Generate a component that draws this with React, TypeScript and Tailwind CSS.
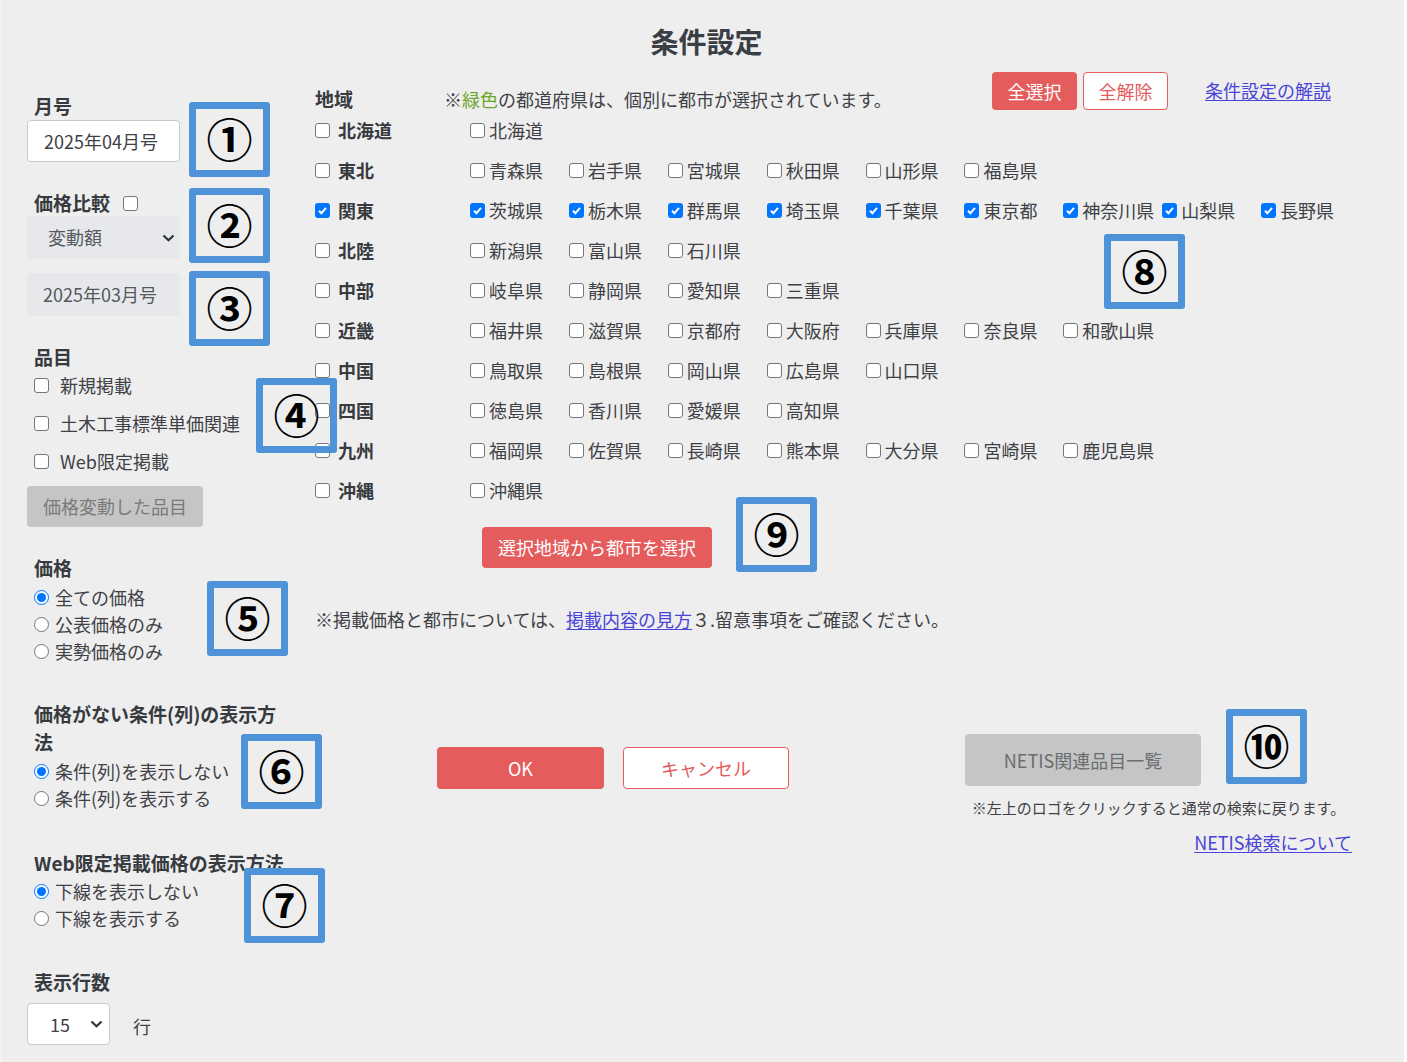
import React from "react";

const regions = [
  { name: "北海道", checked: false, prefs: ["北海道"] },
  { name: "東北", checked: false, prefs: ["青森県", "岩手県", "宮城県", "秋田県", "山形県", "福島県"] },
  {
    name: "関東",
    checked: true,
    prefs: ["茨城県", "栃木県", "群馬県", "埼玉県", "千葉県", "東京都", "神奈川県", "山梨県", "長野県"],
  },
  { name: "北陸", checked: false, prefs: ["新潟県", "富山県", "石川県"] },
  { name: "中部", checked: false, prefs: ["岐阜県", "静岡県", "愛知県", "三重県"] },
  { name: "近畿", checked: false, prefs: ["福井県", "滋賀県", "京都府", "大阪府", "兵庫県", "奈良県", "和歌山県"] },
  { name: "中国", checked: false, prefs: ["鳥取県", "島根県", "岡山県", "広島県", "山口県"] },
  { name: "四国", checked: false, prefs: ["徳島県", "香川県", "愛媛県", "高知県"] },
  { name: "九州", checked: false, prefs: ["福岡県", "佐賀県", "長崎県", "熊本県", "大分県", "宮崎県", "鹿児島県"] },
  { name: "沖縄", checked: false, prefs: ["沖縄県"] },
];

// annotation boxes drawn over the screenshot
const marks = [
  { n: "①", cls: "left-[188px] top-[102px]" },
  { n: "②", cls: "left-[188px] top-[188px]" },
  { n: "③", cls: "left-[188px] top-[271px]" },
  { n: "④", cls: "left-[255px] top-[378px]" },
  { n: "⑤", cls: "left-[206px] top-[581px]" },
  { n: "⑥", cls: "left-[240px] top-[734px]" },
  { n: "⑦", cls: "left-[243px] top-[868px]" },
  { n: "⑧", cls: "left-[1103px] top-[234px]" },
  { n: "⑨", cls: "left-[735px] top-[497px]" },
  { n: "⑩", cls: "left-[1225px] top-[709px]" },
];

const Chevron = () => (
  <svg width="13" height="8" viewBox="0 0 13 8">
    <path d="M1.5 1.5 6.5 6.2l5-4.7" stroke="#2f3338" strokeWidth="2.2" fill="none" />
  </svg>
);

const Label: React.FC<{ children: React.ReactNode; className?: string }> = ({ children, className = "" }) => (
  <div className={"pl-[7px] text-[19px] font-bold leading-[24px] text-[#373a3f] " + className}>{children}</div>
);

const Box = ({ checked = false }: { checked?: boolean }) =>
  checked ? (
    <span className="flex h-[15px] w-[15px] shrink-0 items-center justify-center rounded-[3px] bg-[#0075ff]">
      <svg width="11" height="11" viewBox="0 0 11 11">
        <path d="M2 5.8 4.4 8.2 9 2.8" stroke="white" strokeWidth="2" fill="none" />
      </svg>
    </span>
  ) : (
    <span className="h-[15px] w-[15px] shrink-0 rounded-[3px] border-[1.5px] border-[#767676] bg-white" />
  );

const Radio = ({ checked = false }: { checked?: boolean }) =>
  checked ? (
    <span className="flex h-[15px] w-[15px] shrink-0 items-center justify-center rounded-full border-[1.5px] border-[#0075ff] bg-white">
      <span className="h-[9px] w-[9px] rounded-full bg-[#0075ff]" />
    </span>
  ) : (
    <span className="h-[15px] w-[15px] shrink-0 rounded-full border-[1.5px] border-[#767676] bg-white" />
  );

const RadioRow = ({ label, checked = false }: { label: string; checked?: boolean }) => (
  <label className="flex h-[27px] items-center pl-[7px]">
    <Radio checked={checked} />
    <span className="ml-[6px]">{label}</span>
  </label>
);

export default function App() {
  return (
    <div className="min-h-screen bg-white font-['Noto_Sans_CJK_JP','Noto_Sans',sans-serif] text-[18px] text-[#3e4146]">
      <div className="relative h-[1062px] w-[1404px] border-l border-l-[#f4f4f4] bg-[#eeeeee]">
        <h1 className="pl-[8px] pt-[21px] text-center text-[28px] font-bold leading-[40px] text-[#3a3e45]">
          条件設定
        </h1>

        <div className="mt-[11px] flex pl-[26px]">
          {/* left column */}
          <div className="w-[263px] shrink-0 pt-[22px]">
            <Label>月号</Label>
            <div className="mt-[2px] flex h-[42px] w-[153px] items-center rounded-[4px] border border-[#c9c9c9] bg-white pl-[16px] leading-none">
              2025年04月号
            </div>

            <div className="mt-[29px] flex h-[24px] items-center">
              <Label>価格比較</Label>
              <span className="ml-[13px] flex">
                <Box />
              </span>
            </div>
            <div className="mt-[1px] flex h-[43px] w-[153px] items-center justify-between rounded-[4px] bg-[#e6e8eb] pl-[21px] pr-[5px] text-[#55585d]">
              <span>変動額</span>
              <Chevron />
            </div>
            <div className="mt-[14px] flex h-[43px] w-[153px] items-center rounded-[4px] bg-[#e6e8eb] pl-[16px] text-[#55585d]">
              2025年03月号
            </div>

            <Label className="mt-[29px]">品目</Label>
            <div className="mt-[4px] flex flex-col gap-[14px] pl-[7px]">
              {["新規掲載", "土木工事標準単価関連", "Web限定掲載"].map((t) => (
                <label key={t} className="flex h-[24px] items-center">
                  <Box />
                  <span className="ml-[11px]">{t}</span>
                </label>
              ))}
            </div>
            <button className="mt-[13px] flex h-[41px] w-[176px] items-center justify-center rounded-[4px] bg-[#c5c5c5] text-[#7a7a7a]">
              価格変動した品目
            </button>

            <Label className="mt-[29px]">価格</Label>
            <div className="mt-[4px]">
              <RadioRow label="全ての価格" checked />
              <RadioRow label="公表価格のみ" />
              <RadioRow label="実勢価格のみ" />
            </div>

            <Label className="mt-[35px] w-[262px] leading-[28px]">価格がない条件(列)の表示方法</Label>
            <div className="mt-[2px]">
              <RadioRow label="条件(列)を表示しない" checked />
              <RadioRow label="条件(列)を表示する" />
            </div>

            <Label className="mt-[37px] leading-[28px]">Web限定掲載価格の表示方法</Label>
            <div className="mt-[1px]">
              <RadioRow label="下線を表示しない" checked />
              <RadioRow label="下線を表示する" />
            </div>

            <Label className="mt-[38px]">表示行数</Label>
            <div className="mt-[9px] flex items-center">
              <div className="flex h-[42px] w-[83px] items-center justify-between rounded-[4px] border border-[#c9c9c9] bg-white pl-[22px] pr-[6px]">
                <span>15</span>
                <Chevron />
              </div>
              <span className="ml-[23px] mt-[4px]">行</span>
            </div>
          </div>

          {/* right area */}
          <div className="ml-[25px] flex-1">
            <div className="flex h-[38px] items-start">
              <div className="mt-[15px] w-[129px] text-[19px] font-bold leading-[24px] text-[#373a3f]">地域</div>
              <div className="mt-[15px] w-[548px] leading-[24px]">
                ※<span className="text-[#6ea82a]">緑色</span>の都道府県は、個別に都市が選択されています。
              </div>
              <button className="flex h-[38px] w-[85px] items-center justify-center rounded-[4px] bg-[#e45c5c] text-white">
                全選択
              </button>
              <button className="ml-[6px] flex h-[38px] w-[85px] items-center justify-center rounded-[4px] border border-[#e45c5c] bg-white text-[#e45c5c]">
                全解除
              </button>
              <a className="ml-[37px] mt-[6px] leading-[24px] text-[#4a45d6] underline underline-offset-2">
                条件設定の解説
              </a>
            </div>

            <div>
              {regions.map((r) => (
                <div key={r.name} className="flex h-[40px] items-center">
                  <label className="flex w-[155px] shrink-0 items-center">
                    <Box checked={r.checked} />
                    <span className="ml-[8px] font-bold text-[#373a3f]">{r.name}</span>
                  </label>
                  <div className="grid grid-cols-[repeat(9,98.9px)]">
                    {r.prefs.map((p) => (
                      <label key={p} className="flex items-center whitespace-nowrap">
                        <Box checked={r.checked} />
                        <span className="ml-[4px]">{p}</span>
                      </label>
                    ))}
                  </div>
                </div>
              ))}
            </div>

            <button className="ml-[167px] mt-[17px] flex h-[41px] w-[230px] items-center justify-center rounded-[4px] bg-[#e45c5c] text-white">
              選択地域から都市を選択
            </button>

            <p className="mt-[39px] leading-[24px]">
              ※掲載価格と都市については、
              <a className="text-[#4a45d6] underline underline-offset-2">掲載内容の見方</a>
              ３.留意事項をご確認ください。
            </p>

            <div className="mt-[103px] flex items-start">
              <button className="ml-[122px] mt-[13px] flex h-[42px] w-[167px] items-center justify-center rounded-[4px] bg-[#e45c5c] text-white">
                OK
              </button>
              <button className="ml-[19px] mt-[13px] flex h-[42px] w-[166px] items-center justify-center rounded-[4px] border border-[#e45c5c] bg-white text-[#e45c5c]">
                キャンセル
              </button>
              <div className="ml-[176px] flex w-[387px] flex-col">
                <button className="flex h-[52px] w-[236px] items-center justify-center rounded-[4px] bg-[#c5c5c5] text-[#6a6d72]">
                  NETIS関連品目一覧
                </button>
                <p className="mt-[12px] text-center text-[15px] leading-[20px]">
                  ※左上のロゴをクリックすると通常の検索に戻ります。
                </p>
                <a className="mt-[12px] self-end leading-[24px] text-[#4a45d6] underline underline-offset-2">
                  NETIS検索について
                </a>
              </div>
            </div>
          </div>
        </div>

        {marks.map((m) => (
          <div
            key={m.n}
            className={
              "absolute flex h-[75px] w-[81px] items-center justify-center rounded-[3px] border-[7px] border-[#4e93d7] pb-[5px] text-[46px] font-bold leading-none text-black " +
              m.cls
            }
          >
            {m.n}
          </div>
        ))}
      </div>
    </div>
  );
}
